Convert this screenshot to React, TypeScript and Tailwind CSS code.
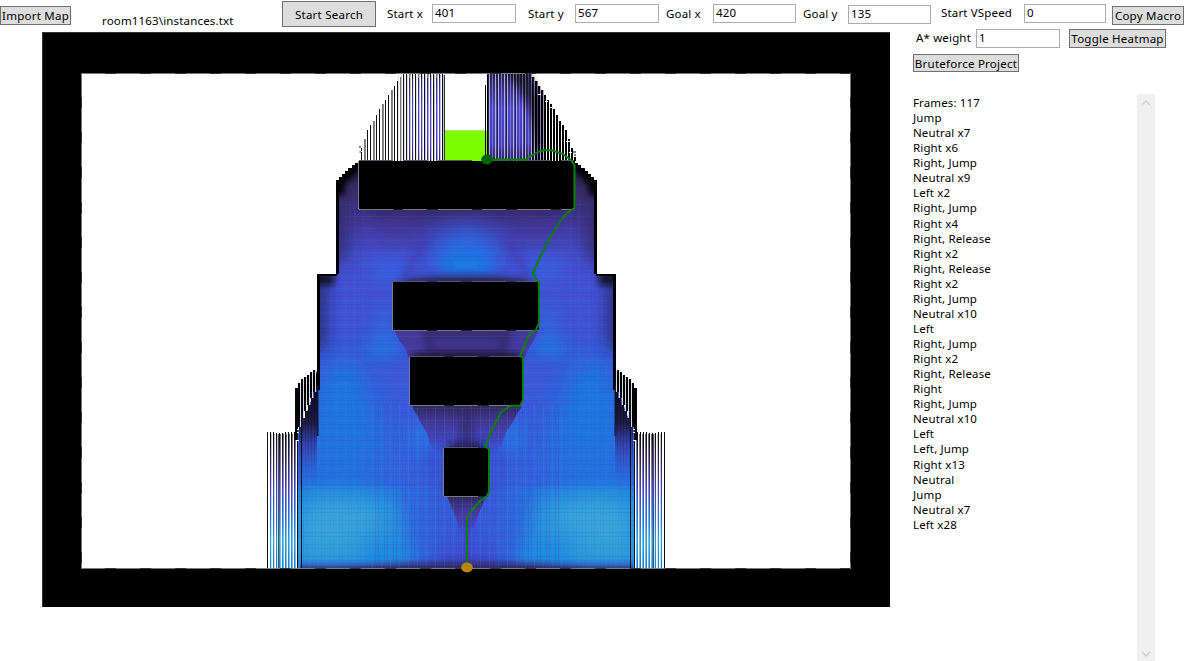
import React from "react";

const steps = [
  "Frames: 117", "Jump", "Neutral x7", "Right x6", "Right, Jump", "Neutral x9", "Left x2",
  "Right, Jump", "Right x4", "Right, Release", "Right x2", "Right, Release", "Right x2",
  "Right, Jump", "Neutral x10", "Left", "Right, Jump", "Right x2", "Right, Release", "Right",
  "Right, Jump", "Neutral x10", "Left", "Left, Jump", "Right x13", "Neutral", "Jump",
  "Neutral x7", "Left x28",
];

function Button({ className, children }: { className: string; children: React.ReactNode }) {
  return (
    <button className={`flex shrink-0 items-center justify-center border border-[#707070] bg-[#dddddd] tracking-[0.24px] whitespace-nowrap ${className}`}>
      {children}
    </button>
  );
}

function Label({ className, children }: { className: string; children: React.ReactNode }) {
  return <label className={`shrink-0 whitespace-nowrap leading-4 tracking-[0.16px] ${className}`}>{children}</label>;
}

function Field({ value, className }: { value: string; className: string }) {
  return (
    <input
      defaultValue={value}
      className={`h-[19px] shrink-0 border border-[#abadb3] bg-white pb-[2px] pl-[2px] tracking-[0.13px] outline-none ${className}`}
    />
  );
}

/** Height at which a column of the upper stripes begins. */
const envelope: [number, number][] = [
  [359, 154], [362, 145], [367, 130], [374, 119], [380, 107], [387, 97], [393, 87], [400, 77], [403, 73], [446, 73],
];

function topAt(x: number) {
  for (let i = 1; i < envelope.length; i++) {
    const [x0, y0] = envelope[i - 1];
    const [x1, y1] = envelope[i];
    if (x <= x1) return Math.round(y0 + ((y1 - y0) * (x - x0)) / (x1 - x0));
  }
  return 73;
}

const leftTop = Array.from({ length: 28 }, (_, i) => 361 + i * 3);
const rightTop = Array.from({ length: 30 }, (_, i) => 487 + i * 3);
const texture = Array.from({ length: 111 }, (_, i) => 300 + i * 3);

const body =
  "M466 161H358V163H355V165H352V168H348V171H345V174H342V177H339V180H336V274H317V370L311 400L304 420L298 430V568H635V430L629 420L622 400L616 370V274H597V180H594V177H591V174H588V171H585V168H581V165H578V163H575V161Z";

const route =
  "M467 567V517L472 510L480 501L487 496L489 491V449L485 446L493 428L501 412L510 406L520 405.500L523 400V358L520 356L529 335L536 330L539 323V282L536 279L533 273L541 255L552 234L560 222L567 213L574.500 208V165L571 160L563 154L552 150.500L545 150L538 152L531 156L526 159.500H487";

const blocks = [
  [359, 161, 215, 48],
  [393, 282, 146, 48],
  [410, 357, 112, 48],
  [444, 448, 44, 48],
];

function SideHeat() {
  return (
    <>
      <ellipse cx="343" cy="412" rx="22" ry="55" fill="#177fe2" filter="url(#b16)" />
      <ellipse cx="335" cy="450" rx="50" ry="55" fill="#2374e0" filter="url(#b16)" opacity=".8" />
      <ellipse cx="383" cy="347" rx="16" ry="8" fill="#1480e4" filter="url(#b8)" />
      <ellipse cx="384" cy="328" rx="9" ry="26" fill="#2f6ae2" filter="url(#b8)" opacity=".7" />
      <ellipse cx="390" cy="270" rx="20" ry="11" fill="#365fe0" filter="url(#b8)" />
      <ellipse cx="420" cy="438" rx="10" ry="16" fill="#2080e6" filter="url(#b8)" opacity=".8" />
      <rect x="290" y="486" width="177" height="83" fill="url(#band)" opacity=".45" />
      <path d="M280 492H395L420 580H280Z" fill="#1a90dd" filter="url(#b8)" opacity=".85" />
      <ellipse cx="355" cy="519" rx="36" ry="15" fill="#45acd8" filter="url(#b16)" />
      <ellipse cx="324" cy="528" rx="28" ry="26" fill="#3da7d8" filter="url(#b16)" />
      <rect x="285" y="546" width="80" height="10" fill="#3aa6d8" filter="url(#b8)" opacity=".8" />
    </>
  );
}

const steppedBars = [
  [299, 383, 427], [302, 379, 418], [305, 377, 411], [308, 375, 405], [311, 372, 398], [314, 370, 392],
];

function SideStripes() {
  return (
    <>
      {Array.from({ length: 10 }, (_, i) => (
        <g key={i}>
          <rect x={267 + i * 3} y={i > 2 && i < 6 ? 433 : 432} width="1" height="136" fill={i === 0 ? "#111" : "url(#fall)"} />
          {i > 0 && <rect x={268 + i * 3} y="434" width="1" height="134" fill="url(#fall)" opacity={i > 3 ? 0.6 : 0.25} />}
        </g>
      ))}
      <rect x="278" y="434" width="1" height="134" fill="#555" />
      <path d="M295 388H298V440H295Z" fill="#050508" />
      {steppedBars.map(([x, top, bottom]) => (
        <g key={x}>
          <rect x={x - 1} y={top} width="2" height={bottom - top} fill="#000" />
          <rect x={x + 1} y={top} width="1" height={bottom - top} fill="#dddbe8" />
          <rect x={x} y={bottom} width="3" height={485 - bottom} fill="url(#ink)" />
          <rect x={x} y={bottom - 6} width="1" height={500 - bottom} fill="url(#ink)" />
        </g>
      ))}
      <path d="M297.500 428V568M301.500 388V568" fill="none" stroke="#061425" />
      <path d="M297 429.500H299M297 432.500H299M297 440.500H299" stroke="#fff" />
    </>
  );
}

function Heatmap() {
  return (
    <svg className="mt-[3px] ml-[42px] block h-[575px] w-[848px] shrink-0" viewBox="42 32 848 575">
      <defs>
        <clipPath id="body"><path d={body} /></clipPath>
        <clipPath id="room"><rect x="81" y="73" width="769" height="496" /></clipPath>
        <filter id="b3" x="-50%" y="-80%" width="200%" height="260%"><feGaussianBlur stdDeviation="3" /></filter>
        <filter id="b8" x="-100%" y="-150%" width="300%" height="400%"><feGaussianBlur stdDeviation="8" /></filter>
        <filter id="b16" x="-100%" y="-100%" width="300%" height="300%"><feGaussianBlur stdDeviation="15" /></filter>
        <linearGradient id="base" gradientUnits="userSpaceOnUse" x1="0" y1="161" x2="0" y2="569">
          <stop offset="0" stopColor="#201b37" />
          <stop offset=".09" stopColor="#3d3274" />
          <stop offset=".16" stopColor="#44399d" />
          <stop offset=".24" stopColor="#4450cf" />
          <stop offset=".4" stopColor="#4053d5" />
          <stop offset=".55" stopColor="#3b59da" />
          <stop offset=".75" stopColor="#3562de" />
          <stop offset="1" stopColor="#3e53d5" />
        </linearGradient>
        <linearGradient id="band">
          <stop offset="0" stopColor="#1c8edd" />
          <stop offset=".5" stopColor="#1b86e0" />
          <stop offset=".85" stopColor="#247ae2" stopOpacity=".7" />
          <stop offset="1" stopColor="#3b5cdd" stopOpacity="0" />
        </linearGradient>
        <linearGradient id="fall" gradientUnits="userSpaceOnUse" x1="0" y1="432" x2="0" y2="569">
          <stop offset="0" stopColor="#050508" />
          <stop offset=".18" stopColor="#29204a" />
          <stop offset=".42" stopColor="#4542ba" />
          <stop offset=".62" stopColor="#2370d5" />
          <stop offset=".8" stopColor="#2c9fdb" />
          <stop offset="1" stopColor="#177fd2" />
        </linearGradient>
        <linearGradient id="ink" gradientUnits="userSpaceOnUse" x1="0" y1="390" x2="0" y2="485">
          <stop offset="0" stopColor="#0a0716" />
          <stop offset=".35" stopColor="#1c1538" stopOpacity=".9" />
          <stop offset=".6" stopColor="#3b309a" stopOpacity=".6" />
          <stop offset="1" stopColor="#3a50d0" stopOpacity="0" />
        </linearGradient>
        <linearGradient id="shade" x1="0" y1="0" x2="0" y2="1">
          <stop offset="0" stopColor="#2f2553" />
          <stop offset=".3" stopColor="#43368c" />
          <stop offset=".7" stopColor="#473cae" stopOpacity=".75" />
          <stop offset="1" stopColor="#453fc4" stopOpacity="0" />
        </linearGradient>
        <linearGradient id="floor" x1="0" y1="0" x2="0" y2="1">
          <stop offset="0" stopColor="#4338b8" stopOpacity="0" />
          <stop offset="1" stopColor="#32286e" />
        </linearGradient>
        <linearGradient id="violet" gradientUnits="userSpaceOnUse" x1="0" y1="73" x2="0" y2="161">
          <stop offset="0" stopColor="#28213f" />
          <stop offset=".4" stopColor="#4a45cc" />
          <stop offset=".8" stopColor="#4440bb" />
          <stop offset="1" stopColor="#2b2350" />
        </linearGradient>
      </defs>

      <rect x="42" y="32" width="848" height="575" />
      <rect x="81" y="73" width="769" height="496" fill="#fff" />

      <rect x="444" y="130" width="43" height="31" fill="#7cfc00" />
      <rect x="444" y="130" width="43" height="1" fill="#a3e86a" />

      <g clipPath="url(#room)">
        {leftTop.map((x, i) => (
          <g key={x}>
            <rect x={x} y={topAt(x)} width="1" height={161 - topAt(x)} fill={i % 3 === 1 ? "#777" : "#111"} />
            {i % 3 === 1 && <rect x={x + 1} y={topAt(x)} width="1" height={161 - topAt(x)} fill="#888" />}
            {i > 11 && <rect x={x + 1} y="75" width="1" height="86" fill={i > 19 ? "#b5b2e8" : "#d5d4e0"} opacity=".8" />}
            {i > 14 && i % 3 !== 0 && <rect x={x} y="78" width="1" height="82" fill="url(#violet)" />}
          </g>
        ))}
        <rect x="444" y="75" width="1" height="86" fill="#333" />
        <rect x="485" y="85" width="1" height="76" />
        {rightTop.map((x, i) => {
          const y = topAt(933 - x - 1);
          return (
            <g key={x}>
              <rect x={x} y={y} width="2" height={161 - y} fill={i < 15 ? "url(#violet)" : "#000"} />
              {i < 19 && <rect x={x + 2} y={y} width="1" height={161 - y} fill={i % 3 === 1 ? "#7770d0" : "#b1aedb"} />}
              {i < 17 && i % 3 === 0 && <rect x={x + 1} y={y} width="1" height={161 - y} fill="#28213f" />}
            </g>
          );
        })}
        <path d="M487.500 75V160" stroke="#000" />
        <path d="M506 71H529L541 100V150H538Q530 100 506 71Z" fill="#000" opacity=".5" filter="url(#b3)" />
        <path d="M538 94.500H541M545 101.500H548M549 107.500H552M566 141.500H570M569 152.500H572M357 151.500H364M360 147.500H363" stroke="#fff" />
        <path d="M360 146V148M359.500 152H361M572 152H576M575 154V156" stroke="#000" />
      </g>

      <g clipPath="url(#body)">
        <path d={body} fill="url(#base)" />
        <ellipse cx="466" cy="247" rx="30" ry="17" fill="#2b6be3" filter="url(#b16)" />
        <ellipse cx="466" cy="258" rx="30" ry="19" fill="#2b6de3" filter="url(#b8)" opacity=".8" />
        <ellipse cx="466" cy="265" rx="28" ry="6" fill="#1183e6" filter="url(#b8)" />
        <SideHeat />
        <g transform="translate(933 0) scale(-1 1)"><SideHeat /></g>

        <path d="M359 200H574L550 216L510 218L490 211H443L423 218L383 216Z" fill="#382b67" opacity=".85" filter="url(#b8)" />
        <path d="M362 203H571L565 213H368Z" fill="#382b67" opacity=".8" filter="url(#b3)" />
        <path d="M383 218L425 215L410 236L395 238ZM550 218L508 215L523 236L538 238Z" fill="#43358c" opacity=".5" filter="url(#b8)" />
        <path d="M420 240L397 282H406L430 240ZM513 240L536 282H527L503 240Z" fill="#42339d" opacity=".35" filter="url(#b3)" />
        <path d="M408 279Q466 273 525 279L534 286H399Z" fill="#29204c" filter="url(#b3)" />
        <path d="M394 330H539L534 340L530 346L524 358H409L405 348L399 340Z" fill="#45399c" />
        <path d="M420 330H513L505 358H428Z" fill="#33285c" opacity=".65" filter="url(#b3)" />
        <path d="M432 340H500V348H432Z" fill="#4b40b0" opacity=".5" filter="url(#b3)" />
        <path d="M415 353H518L522 360H411Z" fill="#1d1633" filter="url(#b3)" />
        <path d="M412 405H521V408L518 412L515 418L512 423L508 429L504 437L501 447L490 455H443L431 447L428 436L424 428L420 421L417 415L413 409Z" fill="url(#shade)" />
        <path d="M462 405H471L476 447H457Z" fill="#30265d" opacity=".6" filter="url(#b3)" />
        <path d="M450 443H483L487 450H446Z" fill="#21193d" filter="url(#b3)" />
        <path d="M426 450L444 450V540L466 568H435L440 530ZM507 450L489 450V540L467 568H498L493 530Z" fill="#433bc2" opacity=".5" filter="url(#b8)" />
        <path d="M447 496H486L482 506L477 518L469 538H464L456 518L451 506Z" fill="url(#shade)" />
        <path d="M464 505H470L472 568H461Z" fill="#4935b0" opacity=".5" filter="url(#b3)" />
        <rect x="300" y="560" width="333" height="9" fill="url(#floor)" opacity=".85" />
        <path d="M350 570Q466 553 583 570V575H350Z" fill="#32275f" opacity=".85" filter="url(#b3)" />

        {texture.map((x, i) => (
          <rect
            key={x} x={x} y={x > 370 && x < 563 ? 405 : 200} width="1" height="369"
            fill={i % 3 ? "#4c39cf" : "#2a9be9"} opacity={x > 370 && x < 563 ? 0.2 : 0.06}
          />
        ))}
        {Array.from({ length: 91 }, (_, i) => (
          <rect key={i} x="296" y={204 + i * 4} width="341" height="1" fill={i % 3 ? "#3a2ba5" : "#37a6ee"} opacity=".09" />
        ))}

        <path d="M336 181V262M597 181V262" fill="none" stroke="#33275e" strokeWidth="22" opacity=".75" filter="url(#b8)" />
        <path d="M317 274V350M616 274V350" fill="none" stroke="#241b48" strokeWidth="16" opacity=".75" filter="url(#b8)" />
        <path d="M312 274H334V285H312ZM599 274H621V285H599Z" fill="#0b0815" opacity=".9" filter="url(#b3)" />
        <path d="M359 160L350 167L336 181V195M574 160L583 167L597 181V195" fill="none" stroke="#000" strokeWidth="17" filter="url(#b3)" />
        <path d="M359 160L350 167L336 181V274M317 274V390M574 160L583 167L597 181V274M616 274V390" fill="none" stroke="#000" strokeWidth="6" />
        <path d="M317 275H337M596 275H616" fill="none" stroke="#000" strokeWidth="2" />
        <path d="M317.500 385V436M615.500 385V436" stroke="#171238" strokeWidth="2" />
      </g>
      <SideStripes />
      <g transform="translate(932 0) scale(-1 1)"><SideStripes /></g>

      {blocks.map(([x, y, w, h]) => (
        <g key={y}>
          <rect x={x} y={y} width={w} height={h} />
          <path d={`M${x - 0.5} ${y}V${y + h}`} stroke="#777b94" />
          <path d={`M${x} ${y + h + 0.5}H${x + w}`} stroke="#22212b" />
          <path d={`M${x} ${y + h + 0.5}H${x + w}`} stroke="#777" strokeDasharray="34 10 24 11" />
          <path d={`M${x} ${y - 0.5}H${x + w}`} stroke="#555564" strokeDasharray="34 10 24 11" />
        </g>
      ))}
      <path d="M81 73.500H851M81 568.500H851M81.500 73V569M850.500 73V569" stroke="#333" />
      <path d="M81 73.500H850M81 568.500H850" stroke="#777" strokeDasharray="24 11" />
      <path d="M81.500 73V569M850.500 73V569" stroke="#777" strokeDasharray="24 11" />
      <path d="M42.500 607V32.500H890" fill="none" stroke="#333" />

      <path d={route} fill="none" stroke="#078007" strokeWidth="2" strokeLinejoin="round" />
      <ellipse cx="487" cy="159.500" rx="5.800" ry="5" fill="#006400" />
      <ellipse cx="467" cy="567.500" rx="5.800" ry="5" fill="#b8860b" />
    </svg>
  );
}

export default function App() {
  return (
    <main className="h-[661px] w-[1184px] overflow-hidden bg-white font-['Noto_Sans','Open_Sans',sans-serif] text-[11.5px] text-black">
      <header className="flex h-[29px] items-start">
        <Button className="mt-[6px] h-[19px] w-[71px]">Import Map</Button>
        <Label className="mt-[13px] ml-[31px] w-[180px]">room1163\instances.txt</Label>
        <Button className="mt-px h-[26px] w-[94px] pt-px">Start Search</Button>
        <Label className="mt-[6px] ml-[11px] w-[45px]">Start x</Label>
        <Field value="401" className="mt-1 w-[84px]" />
        <Label className="mt-[6px] ml-[12px] w-[47px]">Start y</Label>
        <Field value="567" className="mt-1 w-[84px]" />
        <Label className="mt-[6px] ml-[7px] w-[47px]">Goal x</Label>
        <Field value="420" className="mt-1 w-[83px]" />
        <Label className="mt-[6px] ml-[7px] w-[45px]">Goal y</Label>
        <Field value="135" className="mt-[5px] w-[83px]" />
        <Label className="mt-[5px] ml-[10px] w-[83px]">Start VSpeed</Label>
        <Field value="0" className="mt-1 w-[82px]" />
        <Button className="mt-[6px] ml-[6px] h-[19px] w-[72px]">Copy Macro</Button>
      </header>
      <div className="flex h-[632px] items-start">
        <Heatmap />
        <aside className="flex h-full w-[294px] flex-col pl-[23px]">
          <div className="flex h-[25px] items-start">
            <Label className="mt-px ml-[3px] w-[60px]">A* weight</Label>
            <Field value="1" className="w-[84px]" />
            <Button className="ml-[9px] h-[19px] w-[97px]">Toggle Heatmap</Button>
          </div>
          <Button className="h-[18px] w-[106px] pt-px">Bruteforce Project</Button>
          <div className="mt-[22px] flex h-[567px] w-[242px] justify-between">
            <ul className="pt-px leading-[15.07px] tracking-[0.13px]">
              {steps.map((step, i) => <li key={i} className="whitespace-nowrap">{step}</li>)}
            </ul>
            <div className="flex w-[18px] flex-col items-center justify-between bg-[#f0f0f0] pt-[6px] pb-1">
              <svg className="h-[6px] w-[10px]" viewBox="0 0 10 6"><path d="M1 5L5 1L9 5" fill="none" stroke="#cdcdcd" strokeWidth="1.300" /></svg>
              <svg className="h-[6px] w-[10px]" viewBox="0 0 10 6"><path d="M1 1L5 5L9 1" fill="none" stroke="#cdcdcd" strokeWidth="1.300" /></svg>
            </div>
          </div>
        </aside>
      </div>
    </main>
  );
}
